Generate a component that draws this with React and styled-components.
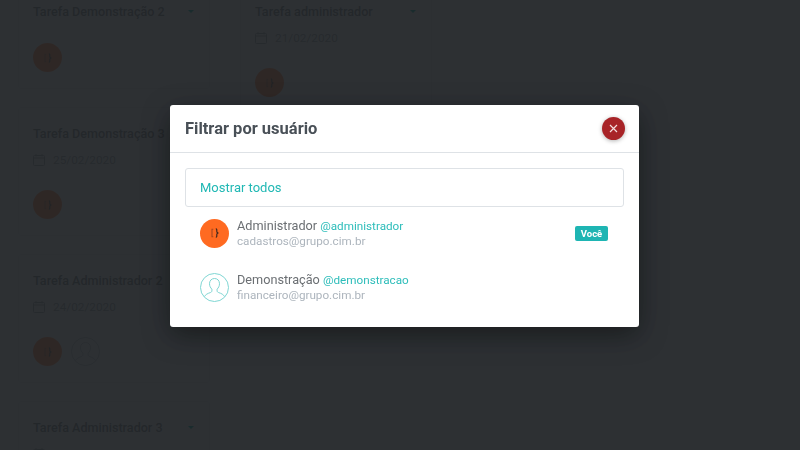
import React from "react";
import styled, { createGlobalStyle } from "styled-components";

const GlobalStyle = createGlobalStyle`
  html, body {
    margin: 0;
    height: 100%;
    overflow: hidden;
    background: #f2f4f5;
    font-family: Roboto, "Liberation Sans", sans-serif;
  }
`;

const columns = [
  [
    { title: "Tarefa Demonstração 2", users: ["admin"] },
    { title: "Tarefa Demonstração 3", date: "25/02/2020", users: ["admin"] },
    { title: "Tarefa Administrador 2", date: "24/02/2020", users: ["admin", "user"] },
    { title: "Tarefa Administrador 3", date: "26/02/2020", users: ["admin"] },
  ],
  [{ title: "Tarefa administrador", date: "21/02/2020", users: ["admin"] }],
];

const users = [
  { name: "Administrador", handle: "@administrador", email: "cadastros@grupo.cim.br", kind: "admin", me: true },
  { name: "Demonstração", handle: "@demonstracao", email: "financeiro@grupo.cim.br", kind: "user" },
];

const UserAvatar = ({ kind, faded }) =>
  kind === "admin" ? (
    <OrangeAvatar $faded={faded}>
      <svg width="12" height="12" viewBox="0 0 12 12" fill="none" strokeWidth="1.1">
        <path d="M4.3 2.2H3V9.8H4.3" stroke="#a8481f" />
        <path d="M6.8 1.8c1.3 0 1 1.3 1 2.4 0 1 .3 1.5 1 1.8-.7.3-1 .8-1 1.8 0 1.1.3 2.4-1 2.4" stroke="#2e2320" />
      </svg>
    </OrangeAvatar>
  ) : (
    <svg width="29" height="29" viewBox="0 0 29 29" fill="none" stroke={faded ? "#c3c8cc" : "#7fd6d3"} strokeWidth="1">
      <circle cx="14.5" cy="14.5" r="14" />
      <path d="M14.5 5.5c-3 0-5 2.1-5 5.2 0 2.3 1 4.2 2.4 5.4v1.8c0 .8-.6 1.3-1.6 1.7-2.6.9-4.8 1.8-5.8 4" />
      <path d="M14.5 5.5c3 0 5 2.1 5 5.2 0 2.3-1 4.2-2.4 5.4v1.8c0 .8.6 1.3 1.6 1.7 2.6.9 4.8 1.8 5.8 4" />
    </svg>
  );

const CalendarIcon = () => (
  <svg width="12" height="12" viewBox="0 0 12 12" fill="none" stroke="#a9adb1" strokeWidth="1">
    <rect x="0.5" y="1.5" width="11" height="10" rx="1" />
    <path d="M0.5 4H11.5M3 0V2.5M9 0V2.5" />
  </svg>
);

const TaskCard = ({ task }) => (
  <Card>
    <CardHeader>
      <CardTitle>{task.title}</CardTitle>
      <Caret />
    </CardHeader>
    {task.date && (
      <DateRow>
        <CalendarIcon />
        {task.date}
      </DateRow>
    )}
    <AvatarRow>
      {task.users.map((u) => (
        <UserAvatar key={u} kind={u} faded />
      ))}
    </AvatarRow>
  </Card>
);

export default function App() {
  return (
    <>
      <GlobalStyle />
      <Board>
        {columns.map((tasks, i) => (
          <Column key={i}>
            {tasks.map((task) => (
              <TaskCard key={task.title} task={task} />
            ))}
          </Column>
        ))}
      </Board>
      <Overlay>
        <Modal>
          <ModalHeader>
            <ModalTitle>Filtrar por usuário</ModalTitle>
            <CloseButton>
              <svg width="9" height="9" viewBox="0 0 9 9" stroke="#f4dede" strokeWidth="1.2">
                <path d="M1 1L8 8M8 1L1 8" />
              </svg>
            </CloseButton>
          </ModalHeader>
          <ModalBody>
            <ShowAll>Mostrar todos</ShowAll>
            <UserList>
              {users.map((user) => (
                <UserRow key={user.email}>
                  <UserAvatar kind={user.kind} />
                  <UserInfo>
                    <UserName>
                      {user.name} <Handle>{user.handle}</Handle>
                    </UserName>
                    <UserEmail>{user.email}</UserEmail>
                  </UserInfo>
                  {user.me && <Badge>Você</Badge>}
                </UserRow>
              ))}
            </UserList>
          </ModalBody>
        </Modal>
      </Overlay>
    </>
  );
}

const Board = styled.div`
  display: flex;
  gap: 30px;
  height: 100vh;
  padding-left: 18px;
  overflow: hidden;
  box-sizing: border-box;
`;
const Column = styled.div`
  width: 192px;
  margin-top: -15px;
  display: flex;
  flex-direction: column;
  gap: 18px;
`;
const Card = styled.div`
  box-sizing: border-box;
  padding: 15px 14px 16px;
  border: 1px solid #e6e8ea;
  border-radius: 3px;
`;
const CardHeader = styled.div`
  display: flex;
  align-items: center;
  justify-content: space-between;
  height: 20px;
  padding-right: 1px;
`;
const CardTitle = styled.div`
  font-size: 12.6px;
  font-weight: 500;
  color: #8a8e92;
  white-space: nowrap;
`;
const Caret = styled.span`
  width: 0;
  height: 0;
  border-left: 3.5px solid transparent;
  border-right: 3.5px solid transparent;
  border-top: 3.5px solid #20b8b4;
`;
const DateRow = styled.div`
  display: flex;
  align-items: center;
  gap: 8px;
  margin-top: 8px;
  height: 17px;
  font-size: 11.8px;
  color: #a9adb1;
`;
const AvatarRow = styled.div`
  display: flex;
  gap: 9px;
  margin-top: 22px;
`;
const OrangeAvatar = styled.div`
  width: 29px;
  height: 29px;
  flex: none;
  border-radius: 50%;
  background: #ff6a21;
  opacity: ${(p) => (p.$faded ? 0.7 : 1)};
  display: flex;
  align-items: center;
  justify-content: center;
`;
const Overlay = styled.div`
  position: fixed;
  inset: 0;
  box-sizing: border-box;
  padding: 105px 0 0 170px;
  background: rgba(25, 29, 32, 0.91);
`;
const Modal = styled.div`
  width: 469px;
  height: 222px;
  background: #fff;
  border-radius: 3px;
  box-shadow: 0 8px 28px rgba(0, 0, 0, 0.45);
`;
const ModalHeader = styled.div`
  height: 48px;
  box-sizing: border-box;
  display: flex;
  align-items: center;
  justify-content: space-between;
  padding: 0 14px 0 15px;
  border-bottom: 1px solid #dee2e6;
`;
const ModalTitle = styled.div`
  font-size: 16.5px;
  font-weight: 700;
  color: #495057;
`;
const CloseButton = styled.button`
  width: 23px;
  height: 23px;
  padding: 0;
  border: none;
  border-radius: 50%;
  background: #a82428;
  box-shadow: 0 1px 4px rgba(0, 0, 0, 0.3);
  display: flex;
  align-items: center;
  justify-content: center;
`;
const ModalBody = styled.div`
  padding: 15px;
`;
const ShowAll = styled.div`
  height: 39px;
  box-sizing: border-box;
  display: flex;
  align-items: center;
  padding: 0 14px;
  border: 1px solid #dee2e6;
  border-radius: 3px;
  font-size: 13px;
  color: #20b8b4;
`;
const UserList = styled.div`
  display: flex;
  flex-direction: column;
  gap: 24px;
  padding: 11px 16px 0 15px;
`;
const UserRow = styled.div`
  display: flex;
  align-items: center;
  gap: 8px;
`;
const UserInfo = styled.div`
  flex: 1;
  min-width: 0;
`;
const UserName = styled.div`
  font-size: 12.7px;
  line-height: 15px;
  color: #6b6f73;
`;
const Handle = styled.span`
  font-size: 11.7px;
  color: #2dbdba;
`;
const UserEmail = styled.div`
  font-size: 11.7px;
  line-height: 14px;
  color: #adb5bd;
`;
const Badge = styled.span`
  width: 33px;
  height: 15px;
  display: flex;
  align-items: center;
  justify-content: center;
  border-radius: 2px;
  background: #1eb5b3;
  color: #fff;
  font-size: 9.5px;
  font-weight: 700;
`;
